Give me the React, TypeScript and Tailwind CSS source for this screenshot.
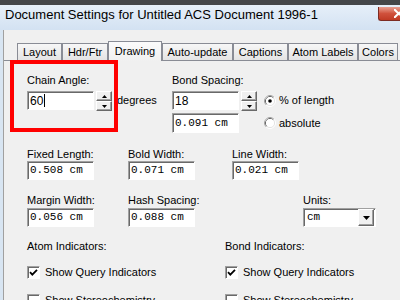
import React from "react";

const field =
  "flex items-center bg-white border border-t-[#a0a0a0] border-l-[#a0a0a0] border-b-white border-r-white shadow-[inset_1px_1px_0_#696969]";
const raised =
  "flex items-center justify-center bg-[#f0f0f0] border border-t-white border-l-white border-b-[#696969] border-r-[#696969] shadow-[inset_-1px_-1px_0_#a0a0a0]";
const mono = "font-['Liberation_Mono',monospace] text-[11px] leading-[13px]";
const label = "text-[11px] leading-[13px]";

function SpinBtn({ up }: { up?: boolean }) {
  return (
    <div className={raised + " h-[10px]"}>
      <svg width="5" height="3" viewBox="0 0 5 3">
        <path d={up ? "M2.5 0L5 3H0z" : "M0 0H5L2.5 3z"} fill="#000" />
      </svg>
    </div>
  );
}

function Spin() {
  return (
    <div className="ml-[2px] flex h-[20px] w-[16px] flex-col">
      <SpinBtn up />
      <SpinBtn />
    </div>
  );
}

function Field({ value, h = "h-[19px]" }: { value: string; h?: string }) {
  return (
    <div className={field + " w-[67px] pl-[2px] " + h}>
      <span className={mono}>{value}</span>
    </div>
  );
}

function Radio({ checked }: { checked?: boolean }) {
  return (
    <svg width="12" height="12" viewBox="0 0 12 12">
      <circle cx="6" cy="6" r="5.5" fill="none" stroke="#ffffff" />
      <path d="M2.11 9.89A5.5 5.5 0 0 1 9.89 2.11" fill="none" stroke="#a0a0a0" />
      <circle cx="6" cy="6" r="4.5" fill="none" stroke="#e3e3e3" />
      <path d="M2.82 9.18A4.5 4.5 0 0 1 9.18 2.82" fill="none" stroke="#696969" />
      <circle cx="6" cy="6" r="4" fill="#ffffff" />
      {checked && <circle cx="6" cy="6" r="1.8" fill="#000" />}
    </svg>
  );
}

function Check({ checked, text }: { checked?: boolean; text: string }) {
  return (
    <div className="flex h-[13px] items-center">
      <div className={field + " h-[13px] w-[13px] justify-center"}>
        {checked && (
          <svg width="9" height="9" viewBox="0 0 9 9">
            <path d="M1 4.2L3.3 6.6L8 1.8" fill="none" stroke="#000" strokeWidth="1.8" />
          </svg>
        )}
      </div>
      <span className={label + " ml-[5px]"}>{text}</span>
    </div>
  );
}

const tabs = [
  { t: "Layout", w: "w-[45px]" },
  { t: "Hdr/Ftr", w: "w-[46px]" },
  { t: "Drawing", w: "w-[54px]", sel: true },
  { t: "Auto-update", w: "w-[71px]" },
  { t: "Captions", w: "w-[55px]" },
  { t: "Atom Labels", w: "w-[70px]" },
  { t: "Colors", w: "w-[40px]" },
];

export default function App() {
  return (
    <div className="flex h-[300px] w-[400px] flex-col overflow-hidden bg-[#d8e5f2] font-['Liberation_Sans',Arial,sans-serif] text-black">
      <div className="h-[5px] shrink-0 bg-[#454749]" />
      <div className="flex h-[25px] shrink-0 justify-between bg-gradient-to-b from-[#e6eff9] to-[#d3e2f2]">
        <div className="pl-[5px] pt-[2px] text-[13px] leading-[15px]">
          Document Settings for Untitled ACS Document 1996-1
        </div>
        <div className="mt-[2px] flex h-[14px] w-[22px] items-center justify-end rounded-bl-[3px] border-b border-l border-[#7c2b22] bg-gradient-to-b from-[#e8a092] via-[#d0513c] to-[#c03a24]">
          <svg width="6" height="9" viewBox="0 0 6 9">
            <path d="M0 0L6 6M0 9L6 3" stroke="#fff" strokeWidth="2" />
          </svg>
        </div>
      </div>
      <div className="ml-[3px] flex flex-1 flex-col border-l border-[#a0a0a0] bg-[#f0f0f0]">
        <div className="flex h-[30px] shrink-0 items-end pl-[13px]">
          {tabs.map((tab) =>
            tab.sel ? (
              <div
                key={tab.t}
                className={
                  tab.w +
                  " relative z-10 -mb-px h-[20px] border border-b-0 border-[#898c95] bg-gradient-to-b from-[#fbfbfb] to-[#f0f0f0] pt-[3px] text-center text-[11px] leading-[13px]"
                }
              >
                {tab.t}
              </div>
            ) : (
              <div
                key={tab.t}
                className={
                  tab.w +
                  " h-[17px] border border-b-0 border-[#898c95] bg-gradient-to-b from-[#f7f7f7] to-[#e4e4e4] pt-[2px] text-center text-[11px] leading-[13px]"
                }
              >
                {tab.t}
              </div>
            )
          )}
        </div>
        <div className="relative flex-1 border-t border-[#898c95] pl-[23px] pt-[13px]">
          <div className="absolute left-[6px] top-[-1px] z-20 h-[72px] w-[108px] border-4 border-[#ff0000]" />

          <div className="flex">
            <div className="w-[145px]">
              <div className={label}>Chain Angle:</div>
              <div className="mt-[4px] flex items-start">
                <div className={field + " h-[19px] w-[67px] pl-[2px]"}>
                  <span className="text-[12px] leading-[14px]">60</span>
                  <span className="ml-px inline-block h-[13px] w-px bg-black" />
                </div>
                <Spin />
                <span className={label + " ml-[5px] mt-[3px]"}>degrees</span>
              </div>
            </div>
            <div>
              <div className={label}>Bond Spacing:</div>
              <div className="mt-[4px] flex items-start">
                <div className="flex flex-col">
                  <div className={field + " h-[19px] w-[67px] pl-[2px]"}>
                    <span className="text-[12px] leading-[14px]">18</span>
                  </div>
                  <div className="mt-[3px]">
                    <Field value="0.091 cm" h="h-[20px]" />
                  </div>
                </div>
                <Spin />
                <div className="ml-[7px] flex flex-col">
                  <div className="flex h-[19px] items-center">
                    <Radio checked />
                    <span className={label + " ml-[3px]"}>% of length</span>
                  </div>
                  <div className="mt-[3px] flex h-[20px] items-center">
                    <Radio />
                    <span className={label + " ml-[3px]"}>absolute</span>
                  </div>
                </div>
              </div>
            </div>
          </div>

          <div className="mt-[15px] flex">
            <div className="w-[101px]">
              <div className={label}>Fixed Length:</div>
              <Field value="0.508 cm" />
            </div>
            <div className="w-[104px]">
              <div className={label}>Bold Width:</div>
              <Field value="0.071 cm" />
            </div>
            <div>
              <div className={label}>Line Width:</div>
              <Field value="0.021 cm" />
            </div>
          </div>

          <div className="mt-[14px] flex">
            <div className="w-[101px]">
              <div className={label}>Margin Width:</div>
              <div className="mt-[1px]">
                <Field value="0.056 cm" />
              </div>
            </div>
            <div className="w-[175px]">
              <div className={label}>Hash Spacing:</div>
              <div className="mt-[1px]">
                <Field value="0.088 cm" />
              </div>
            </div>
            <div>
              <div className={label}>Units:</div>
              <div className={field + " mt-[1px] h-[19px] w-[73px] justify-between"}>
                <span className={mono + " pl-[3px]"}>cm</span>
                <div className={raised + " mr-px h-[17px] w-[16px]"}>
                  <svg width="7" height="4" viewBox="0 0 7 4">
                    <path d="M0 0H7L3.5 4z" fill="#000" />
                  </svg>
                </div>
              </div>
            </div>
          </div>

          <div className="mt-[13px] flex">
            <div className="w-[198px]">
              <div className={label}>Atom Indicators:</div>
              <div className="mt-[13px]">
                <Check checked text="Show Query Indicators" />
              </div>
              <div className="mt-[15px]">
                <Check text="Show Stereochemistry" />
              </div>
            </div>
            <div>
              <div className={label}>Bond Indicators:</div>
              <div className="mt-[13px]">
                <Check checked text="Show Query Indicators" />
              </div>
              <div className="mt-[15px]">
                <Check text="Show Stereochemistry" />
              </div>
            </div>
          </div>
        </div>
      </div>
    </div>
  );
}
